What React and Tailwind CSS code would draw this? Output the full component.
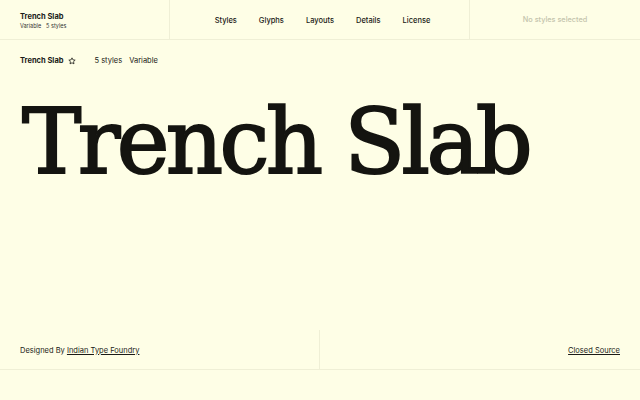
import React from "react";

const navItems = ["Styles", "Glyphs", "Layouts", "Details", "License"];

function Star() {
  return (
    <svg width="8" height="8" viewBox="0 0 24 24" fill="none" stroke="currentColor" strokeWidth="2.4" strokeLinejoin="round">
      <path d="M12 2.5l2.9 6.1 6.6.8-4.9 4.6 1.3 6.6L12 17.3l-5.9 3.3 1.3-6.6-4.9-4.6 6.6-.8z" />
    </svg>
  );
}

export default function App() {
  return (
    <div className="w-[640px] h-[400px] bg-[#fefee6] text-[#1a1a16] font-['Inter',sans-serif] flex flex-col overflow-hidden">
      {/* top bar */}
      <header className="h-[40px] flex border-b border-[#efefd6]">
        <div className="w-[170px] border-r border-[#efefd6] flex flex-col justify-center pl-[20px] pt-[2px]">
          <div className="text-[7.5px] font-bold leading-[10px]">Trench Slab</div>
          <div className="text-[5.5px] leading-[8px] flex gap-[5px] text-[#333]">
            <span>Variable</span>
            <span>5 styles</span>
          </div>
        </div>
        <nav className="w-[300px] border-r border-[#efefd6] flex items-center justify-center gap-[22px] text-[7.5px] font-medium pl-[6px] pt-[2px]">
          {navItems.map((item) => (
            <span key={item}>{item}</span>
          ))}
        </nav>
        <div className="flex-1 flex items-center justify-center text-[7.3px] text-[#c4c4ad] font-medium pt-[2px]">
          No styles selected
        </div>
      </header>

      {/* font meta */}
      <div className="h-[40px] flex items-center pl-[20px] pt-[2px] text-[7.5px]">
        <span className="font-bold">Trench Slab</span>
        <span className="ml-[5px] mr-[18px] flex"><Star /></span>
        <span>5 styles</span>
        <span className="ml-[7px]">Variable</span>
      </div>

      {/* specimen */}
      <div className="flex-1 pl-[22px] pt-[17px]">
        <div className="font-['DejaVu_Serif',serif] text-[89px] leading-[90px] tracking-[-3.6px] text-[#141410] [-webkit-text-stroke:2px_#141410]">
          Trench Slab
        </div>
      </div>

      {/* footer */}
      <footer className="h-[40px] flex border-b border-[#efefd6] mb-[30px] text-[7.5px]">
        <div className="w-[320px] border-r border-[#efefd6] flex items-center pl-[20px] pt-[2px]">
          <span>Designed By&nbsp;</span>
          <span className="underline">Indian Type Foundry</span>
        </div>
        <div className="flex-1 flex items-center justify-end pr-[20px] pt-[2px]">
          <span className="underline">Closed Source</span>
        </div>
      </footer>
    </div>
  );
}
